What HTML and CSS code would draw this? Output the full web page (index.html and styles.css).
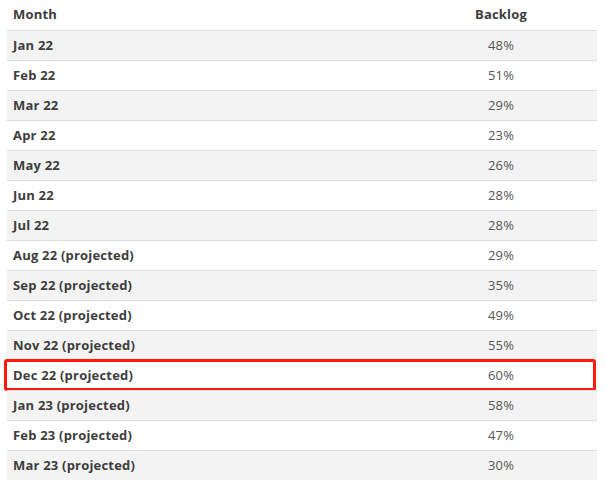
FILE: index.html
```html
<!DOCTYPE html>
<html>
<head>
<meta charset="utf-8">
<link rel="stylesheet" href="styles.css">
</head>
<body>
<div class="table">
  <div class="row head"><div class="c-month">Month</div><div class="c-val">Backlog</div></div>
  <div class="row odd"><div class="c-month">Jan 22</div><div class="c-val">48%</div></div>
  <div class="row"><div class="c-month">Feb 22</div><div class="c-val">51%</div></div>
  <div class="row odd"><div class="c-month">Mar 22</div><div class="c-val">29%</div></div>
  <div class="row"><div class="c-month">Apr 22</div><div class="c-val">23%</div></div>
  <div class="row odd"><div class="c-month">May 22</div><div class="c-val">26%</div></div>
  <div class="row"><div class="c-month">Jun 22</div><div class="c-val">28%</div></div>
  <div class="row odd"><div class="c-month">Jul 22</div><div class="c-val">28%</div></div>
  <div class="row"><div class="c-month">Aug 22 (projected)</div><div class="c-val">29%</div></div>
  <div class="row odd"><div class="c-month">Sep 22 (projected)</div><div class="c-val">35%</div></div>
  <div class="row"><div class="c-month">Oct 22 (projected)</div><div class="c-val">49%</div></div>
  <div class="row odd"><div class="c-month">Nov 22 (projected)</div><div class="c-val">55%</div></div>
  <div class="row highlight"><div class="c-month">Dec 22 (projected)</div><div class="c-val">60%</div></div>
  <div class="row odd"><div class="c-month">Jan 23 (projected)</div><div class="c-val">58%</div></div>
  <div class="row"><div class="c-month">Feb 23 (projected)</div><div class="c-val">47%</div></div>
  <div class="row odd"><div class="c-month">Mar 23 (projected)</div><div class="c-val">30%</div></div>
</div>
</body>
</html>
```
FILE: styles.css
```css
html, body {
  margin: 0;
  padding: 0;
  background: #ffffff;
}
body {
  font-family: "Open Sans", "Liberation Sans", sans-serif;
  font-size: 13px;
  letter-spacing: 0.2px;
  color: #444;
}
.table {
  margin-left: 7px;
  width: 590px;
  display: flex;
  flex-direction: column;
}
.row {
  display: grid;
  grid-template-columns: 398px 192px;
  height: 30px;
  align-items: center;
  border-top: 1px solid #dddddd;
  box-sizing: border-box;
  position: relative;
  padding-bottom: 2px;
}
.row.head {
  border-top: none;
  height: 30px;
}
.row.odd {
  background: #f3f3f3;
}
.c-month {
  padding-left: 6px;
  font-weight: 700;
  color: #3d3d3d;
}
.c-val {
  text-align: center;
  color: #555;
}
.head .c-val {
  font-weight: 700;
  color: #3d3d3d;
}
.highlight::after {
  content: "";
  position: absolute;
  left: -3px;
  right: 1px;
  top: -2px;
  bottom: -1px;
  border: 3px solid #ff1a0f;
  border-radius: 3px;
  pointer-events: none;
}
```
